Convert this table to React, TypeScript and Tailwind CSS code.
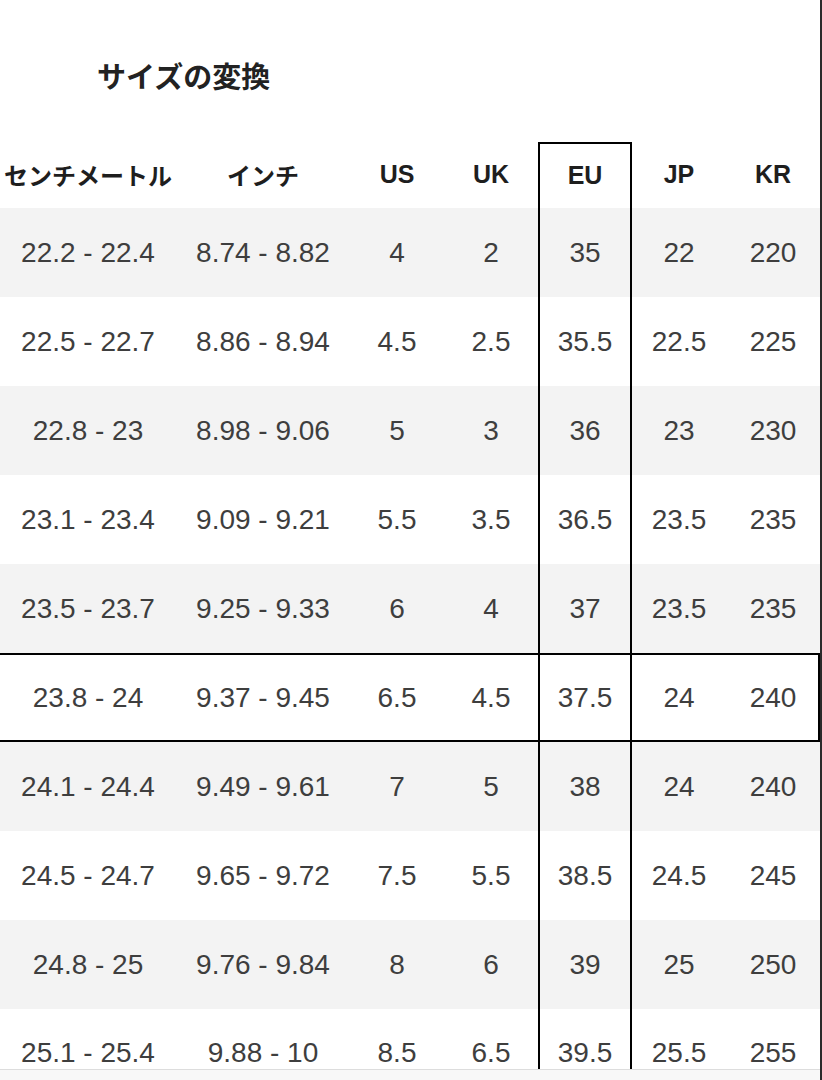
import React from "react";

const rows: string[][] = [
  ["22.2 - 22.4", "8.74 - 8.82", "4", "2", "35", "22", "220"],
  ["22.5 - 22.7", "8.86 - 8.94", "4.5", "2.5", "35.5", "22.5", "225"],
  ["22.8 - 23", "8.98 - 9.06", "5", "3", "36", "23", "230"],
  ["23.1 - 23.4", "9.09 - 9.21", "5.5", "3.5", "36.5", "23.5", "235"],
  ["23.5 - 23.7", "9.25 - 9.33", "6", "4", "37", "23.5", "235"],
  ["23.8 - 24", "9.37 - 9.45", "6.5", "4.5", "37.5", "24", "240"],
  ["24.1 - 24.4", "9.49 - 9.61", "7", "5", "38", "24", "240"],
  ["24.5 - 24.7", "9.65 - 9.72", "7.5", "5.5", "38.5", "24.5", "245"],
  ["24.8 - 25", "9.76 - 9.84", "8", "6", "39", "25", "250"],
  ["25.1 - 25.4", "9.88 - 10", "8.5", "6.5", "39.5", "25.5", "255"],
];

const headers = ["センチメートル", "インチ", "US", "UK", "EU", "JP", "KR"];

const grid = "grid grid-cols-[176px_174px_94px_94px_94px_94px_94px]";

export default function App() {
  return (
    <div
      className="w-[822px] h-[1080px] overflow-hidden bg-white border-r-2 border-[#2a2a2a]"
      style={{ fontFamily: '"Liberation Sans", "Noto Sans CJK JP", Arial, sans-serif' }}
    >
      <div className="h-[142px] pl-[97px] pt-[61px]">
        <h1
          className="text-[29px] leading-[29px] font-bold text-[#222]"
          style={{ fontFamily: '"Noto Sans CJK JP", "Liberation Sans", sans-serif' }}
        >
          サイズの変換
        </h1>
      </div>

      <div className={`${grid} h-[66px] text-[25px] font-bold text-[#1e1e1e]`}>
        {headers.map((h, i) => (
          <div
            key={h}
            className={
              i === 4
                ? "flex items-center justify-center border-x-2 border-t-2 border-black"
                : "flex items-center justify-center"
            }
            style={i < 2 ? { fontFamily: '"Noto Sans CJK JP", sans-serif', fontSize: 24 } : undefined}
          >
            {h}
          </div>
        ))}
      </div>

      {rows.map((r, ri) => {
        const gray = ri % 2 === 0;
        const highlight = ri === 5;
        const last = ri === rows.length - 1;
        return (
          <div
            key={ri}
            className={[
              grid,
              "text-[28px] leading-[28px] text-[#3e3e3e]",
              gray ? "bg-[#f3f3f3]" : "bg-white",
              highlight ? "border-y-2 border-r-2 border-black" : "",
              last ? "h-[61px] border-b border-[#dddddd]" : "h-[89px]",
            ].join(" ")}
          >
            {r.map((c, ci) => (
              <div
                key={ci}
                className={[
                  "flex justify-center",
                  last ? "items-start pt-[30px]" : "items-center",
                  ci === 4 ? "border-x-2 border-black" : "",
                ].join(" ")}
              >
                {c}
              </div>
            ))}
          </div>
        );
      })}
      <div className="h-[20px] bg-[#f8f8f8]" />
    </div>
  );
}
